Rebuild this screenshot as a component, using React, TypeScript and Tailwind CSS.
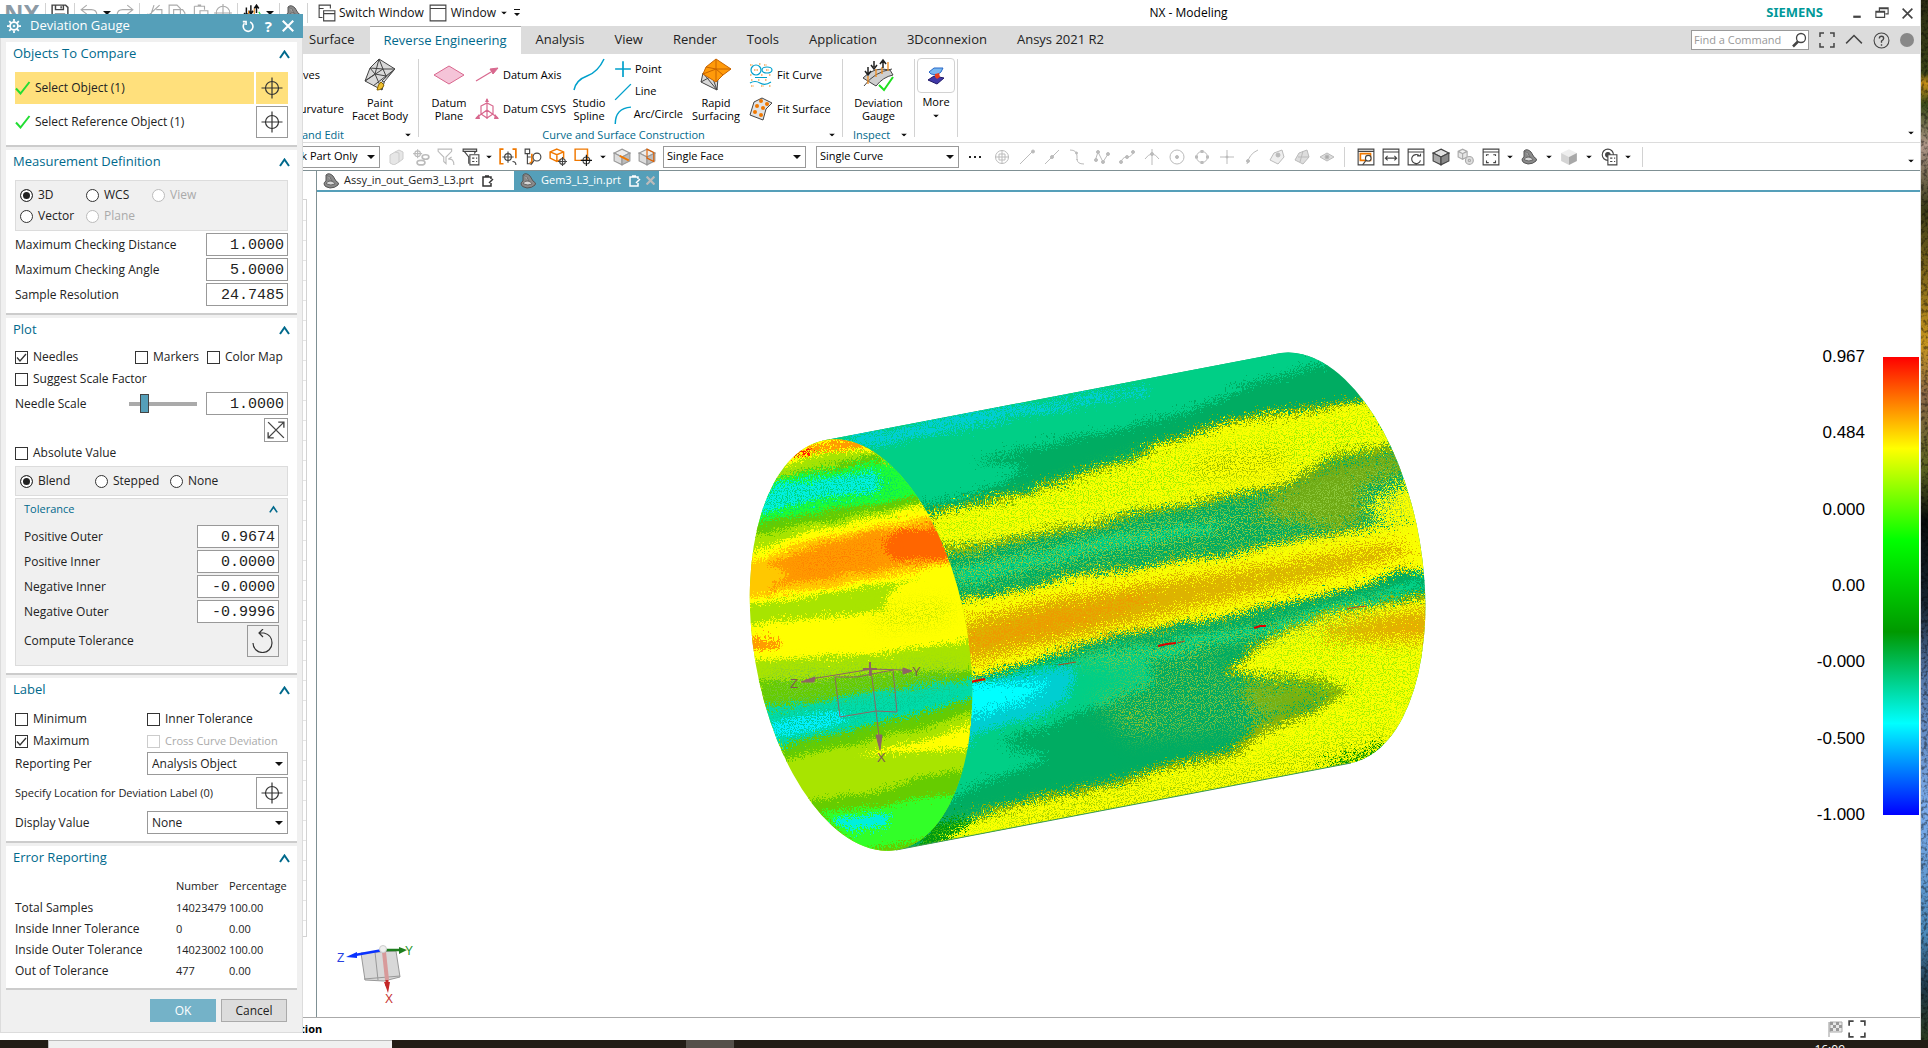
import type { ReactNode } from "react";

const Caret = ({ className = "" }: { className?: string }) => (
  <svg width="8" height="4" viewBox="0 0 8 4" className={`shrink-0 ${className}`}>
    <path d="M0 0h8L4 4z" fill="#111" />
  </svg>
);

const Sep = ({ className = "h-5" }: { className?: string }) => (
  <div className={`w-px shrink-0 bg-[#d2d2d2] ${className}`} />
);

function Icon({ size = 18, color = "#444", box = 16, children }: { size?: number; color?: string; box?: number; children: ReactNode }) {
  return (
    <svg width={size} height={size} viewBox={`0 0 ${box} ${box}`} fill="none" stroke={color} className="shrink-0">
      {children}
    </svg>
  );
}

const Target = () => (
  <svg width="22" height="22" viewBox="0 0 22 22" fill="none" stroke="#333" strokeWidth="1.200">
    <circle cx="11" cy="11" r="6.500" />
    <path d="M11 .5v21M.5 11h21" />
  </svg>
);

const Tick = () => (
  <svg width="16" height="14" viewBox="0 0 16 14" fill="none" stroke="#22dd33" strokeWidth="2" className="shrink-0">
    <path d="M1 7.500l4.500 5L14.500 1" />
  </svg>
);

const PartIcon = () => (
  <svg width="17" height="16" viewBox="0 0 17 16" className="shrink-0">
    <path d="M3 2q3-3 7 1l3 5q4 2 2 4-3 3-8 3-6-1-6-4 0-2 2-3z" fill="#8a8a8a" stroke="#555" />
    <path d="M4 2.500q3 0 5 5.500M3.500 11q0-3 4.500-3 4 1 4 3-4 2-8.500 0z" fill="#d8d8d8" stroke="#666" />
  </svg>
);

const DocIcon = ({ color }: { color: string }) => (
  <svg width="12" height="12" viewBox="0 0 12 12" fill="none" stroke={color} strokeWidth="1.500" className="shrink-0">
    <path d="M9 4V2H1v9h8V8M3 1h4M11 4L7 8" />
  </svg>
);

const Chevron = ({ size = 11 }: { size?: number }) => (
  <svg width={size} height="9" viewBox="0 0 11 9" fill="none" stroke="#00698c" strokeWidth="2">
    <path d="M1 8l4.500-6.500L10 8" />
  </svg>
);

const Corners = ({ size = 16 }: { size?: number }) => (
  <Icon size={size}>
    <path d="M1 5V1h4M11 1h4v4M15 11v4h-4M5 15H1v-4" strokeWidth="1.500" />
  </Icon>
);

/* ---------- quick access bar ---------- */

function TitleBar() {
  return (
    <header className="flex h-[26px] shrink-0 items-center bg-white text-xs">
      <div className="flex w-[318px] shrink-0 items-center gap-[5px] pl-1">
        <span className="w-[36px] text-[24px] leading-[26px] font-bold text-[#8c9aa5]">NX</span>
        <Sep />
        <Icon size={18}><path d="M1 1h12l2 2v12H1zM4 1v4h7V1M4 15V9h8v6M9 2v2" strokeWidth="1.300" /></Icon>
        <Sep />
        <Icon color="#aaa"><path d="M6 1L1 5l5 4M1 5h9q5 0 5 5v2" /></Icon>
        <Caret />
        <Icon color="#aaa"><path d="M10 1l5 4-5 4M15 5H6q-5 0-5 5v2" /></Icon>
        <Sep />
        <Icon color="#aaa"><path d="M1 12L13 1M8 1l-3 9M3 9a2 3 0 1 0 2 4M10 5h5v4" /></Icon>
        <Icon color="#aaa"><path d="M1 1h7l3 3v8H1zM5 5h8l2 3v8H5z" /></Icon>
        <Icon color="#aaa"><path d="M3 2h9v3M3 2v10h4M6 1h3M8 6h7v9H8z" /></Icon>
        <Icon color="#aaa"><circle cx="8" cy="8" r="6" /><path d="M8 0v16M0 8h16" /></Icon>
        <Sep />
        <Icon>
          <path d="M3 3v7M1 8l2 3 2-3M7 1v7M5 6l2 3 2-3M12 8V1M10 4l2-3 2 3" stroke="#111" strokeWidth="1.300" />
          <path d="M5 6v6M10 4v6" stroke="#f28c1e" />
          <path d="M14 7l2 3" stroke="#22dd33" />
        </Icon>
        <Caret />
        <Sep />
        <PartIcon />
        <Sep />
      </div>
      <Icon><path d="M1 4V1h10v3M1 4h4M1 4v8h3M5 6h10v9H5zM5 8.500h10" /></Icon>
      <a href="#switch" className="ml-[3px] text-[#111]">Switch Window</a>
      <span className="ml-[5px] flex items-center">
        <Icon><path d="M1 1h14v14H1zM1 4h14" /></Icon>
      </span>
      <a href="#window" className="ml-1 text-[#111]">Window</a>
      <Caret className="ml-1 scale-75" />
      <svg width="8" height="8" viewBox="0 0 8 8" className="ml-[5px] shrink-0"><path d="M1 0h6v1H1zM1 4h6L4 7z" fill="#111" /></svg>
      <div className="flex-[7]" />
      <h1 className="text-xs text-black">NX - Modeling</h1>
      <div className="flex-[6]" />
      <span className="font-['Noto_Sans'] text-[13px] font-bold text-[#009999]">SIEMENS</span>
      <div className="ml-7 flex items-center gap-3 pr-[6px]">
        <button aria-label="Minimize"><Icon size={12}><path d="M3 13h10" strokeWidth="3" /></Icon></button>
        <button aria-label="Restore"><Icon size={14}><path d="M5 6V2h10v7h-3M1 6h10v7H1zM5 3h10M1 7h10" strokeWidth="1.300" /></Icon></button>
        <button aria-label="Close"><Icon size={13}><path d="M2 2l12 12M14 2L2 14" strokeWidth="2" /></Icon></button>
      </div>
    </header>
  );
}

const TABS = ["Surface", "Reverse Engineering", "Analysis", "View", "Render", "Tools", "Application", "3Dconnexion", "Ansys 2021 R2"];

function TabBar() {
  return (
    <nav className="flex h-7 shrink-0 items-stretch bg-[#dcdcdc] pl-[294px] text-[13px] text-[#222]">
      {TABS.map((tab) => (
        <a
          key={tab}
          href="#tab"
          className={tab === "Reverse Engineering" ? "flex items-center border-t border-[#aaa] bg-white px-[14px] text-[#00698c]" : "flex items-center px-[15px]"}
        >
          {tab}
        </a>
      ))}
      <div className="flex-1" />
      <div className="flex items-center gap-[10px] pr-[6px]">
        <label className="flex h-5 w-[118px] items-center border border-[#999] bg-white pr-px">
          <input aria-label="Find a Command" placeholder="Find a Command" className="w-full min-w-0 pl-[2px] text-[11px] outline-none placeholder:text-[#999]" />
          <Icon size={16}><circle cx="10" cy="6" r="4.500" strokeWidth="1.300" /><path d="M7 9.500l-5 5" strokeWidth="2.500" /></Icon>
        </label>
        <Corners />
        <Icon><path d="M1 11l7-7 7 7" strokeWidth="1.300" /></Icon>
        <Icon size={17}><circle cx="8" cy="8" r="7" /><path d="M6 6q0-2 2-2t2 2q0 1-2 2.500V10M8 11.500v1.500" strokeWidth="1.300" /></Icon>
        <span className="h-[14px] w-[14px] rounded-full bg-[#888]" />
      </div>
    </nav>
  );
}

/* ---------- ribbon ---------- */

function BigButton({ icon, lines, className = "" }: { icon: ReactNode; lines: string[]; className?: string }) {
  return (
    <button className={`flex shrink-0 flex-col items-center text-[11px] leading-[13px] text-black ${className}`}>
      <span className="mb-1 flex h-[34px] items-center justify-center">{icon}</span>
      {lines.map((line) => (
        <span key={line} className="whitespace-nowrap">{line}</span>
      ))}
    </button>
  );
}

function SmallButton({ icon, label, className = "h-[34px] gap-1" }: { icon: ReactNode; label: string; className?: string }) {
  return (
    <button className={`flex items-center text-[11px] whitespace-nowrap text-black ${className}`}>
      <span className="flex w-6 justify-center">{icon}</span>
      {label}
    </button>
  );
}

const Facet = () => (
  <svg width="34" height="34" viewBox="0 0 34 34" stroke="#444" strokeLinejoin="round">
    <path d="M7 10L16 1l16 10-9 7-4 14-17-9z" fill="#d9d9d9" />
    <path d="M7 10l13 1 12 0M16 1l4 10-18 12M20 11l3 7M7 10l5 6 7 16M12 16l11 2M2 23l10-7M16 1l-4 15M10 28l13-10" fill="none" />
    <path d="M31 12L21 24l-2-1z" fill="#fff" />
    <path d="M18 24l3 3q-2 5-7 5 1-6 4-8z" fill="#f0c030" stroke="#886600" />
  </svg>
);

function Ribbon() {
  return (
    <section className="flex h-[89px] shrink-0 border-b border-[#dcdcdc] bg-white">
      <div className="flex w-[418px] shrink-0 flex-col">
        <div className="flex h-[75px] justify-end pt-1 pr-[10px]">
          <div className="mr-2 flex w-[90px] flex-col items-end text-[11px]">
            <button className="h-[34px] pr-6">Curves</button>
            <button className="h-[34px]">Curvature</button>
          </div>
          <BigButton className="w-14" icon={<Facet />} lines={["Paint", "Facet Body"]} />
        </div>
        <div className="flex h-3 items-center justify-between pr-[6px] pl-[302px] text-[11px] text-[#00698c]">
          and Edit
          <Caret className="scale-75" />
        </div>
      </div>
      <Sep className="mt-[5px] h-[78px]" />
      <div className="flex w-[423px] shrink-0 flex-col">
        <div className="flex h-[75px] pt-1 pl-2">
          <BigButton
            className="w-11"
            icon={<svg width="32" height="20" viewBox="0 0 32 20"><path d="M16 1l15 9-15 9L1 10z" fill="#f5c4d8" stroke="#d8688e" /></svg>}
            lines={["Datum", "Plane"]}
          />
          <div className="ml-1 flex w-[88px] flex-col">
            <SmallButton label="Datum Axis" icon={<svg width="24" height="16" viewBox="0 0 24 16" stroke="#d8688e" fill="#d8688e"><path d="M1 14L16 5" strokeWidth="1.200" /><path d="M15 2l8-1-5 6z" /></svg>} />
            <SmallButton label="Datum CSYS" icon={<svg width="24" height="22" viewBox="0 0 24 22" stroke="#d8688e" fill="none" strokeWidth="1.200"><path d="M12 1v20M6 8l6-3 6 3v8l-6 4-6-4zM12 12L1 20M12 12l11 8" /><path d="M10 4l2-4 2 4zM4 16l-4 5h5zM20 16l4 5h-5z" fill="#d8688e" stroke="none" /></svg>} />
          </div>
          <BigButton
            className="ml-1 w-11"
            icon={<svg width="34" height="34" viewBox="0 0 34 34" fill="none" stroke="#00a0cc" strokeWidth="1.500"><path d="M2 32q2-10 13-14T32 1" /></svg>}
            lines={["Studio", "Spline"]}
          />
          <div className="flex w-[72px] flex-col">
            <SmallButton className="h-[22px]" label="Point" icon={<Icon color="#00a0cc"><path d="M8 1v14M1 8h14" strokeWidth="1.500" /></Icon>} />
            <SmallButton className="h-[23px]" label="Line" icon={<Icon color="#00a0cc"><path d="M1 15L15 1" strokeWidth="1.200" /></Icon>} />
            <SmallButton className="h-[23px]" label="Arc/Circle" icon={<Icon color="#00a0cc"><path d="M2 16Q2 2 16 1" strokeWidth="1.300" /></Icon>} />
          </div>
          <BigButton
            className="ml-2 w-[50px]"
            icon={
              <svg width="34" height="34" viewBox="0 0 34 34" stroke="#444" strokeLinejoin="round">
                <path d="M4 15l-2 9 16 8 1-12z" fill="#d9d9d9" />
                <path d="M4 15l14 17M2 24l11-6 5 14" fill="none" />
                <path d="M7 9L17 1l15 10-8 6-7 7L4 16z" fill="#ff9a0a" stroke="#c86400" />
                <path d="M7 9l10 2 15 0M17 1v10L4 16M17 11l7 6M17 11v12" fill="none" stroke="#c86400" />
              </svg>
            }
            lines={["Rapid", "Surfacing"]}
          />
          <div className="ml-2 flex flex-col">
            <SmallButton
              label="Fit Curve"
              icon={
                <svg width="24" height="24" viewBox="0 0 24 24" fill="none" stroke="#00a0cc" strokeWidth="1.200">
                  <circle cx="7" cy="7" r="5" /><ellipse cx="18" cy="7" rx="5" ry="3" /><path d="M1 20q5-3 10 0t11-1M6 14.500h12" />
                  <path d="M1 2h3M10 1h2M1 12h2M15 2h3M12 12h2M20 12h2M2 17h2M9 17h2M16 17h2M2 23h3M12 23h3M20 23h2M5 7h4M17 7h3" stroke="#f07800" strokeDasharray="1.500 1" />
                </svg>
              }
            />
            <SmallButton
              label="Fit Surface"
              icon={
                <svg width="24" height="24" viewBox="0 0 24 24">
                  <path d="M5 5l8-4 10 5-6 6-3 11L1 18z" fill="#e2e2e2" stroke="#444" />
                  <g fill="#f07800"><circle cx="12" cy="4" r="2" /><circle cx="18" cy="7" r="2" /><circle cx="8" cy="9" r="2" /><circle cx="14" cy="11" r="2" /><circle cx="6" cy="15" r="2" /><circle cx="12" cy="18" r="2" /></g>
                </svg>
              }
            />
          </div>
        </div>
        <div className="flex h-3 items-center pr-[6px] text-[11px] text-[#00698c]">
          <span className="flex-1 text-center">Curve and Surface Construction</span>
          <Caret className="scale-75" />
        </div>
      </div>
      <Sep className="mt-[5px] h-[78px]" />
      <div className="flex w-[71px] shrink-0 flex-col">
        <div className="flex h-[75px] justify-center pt-1">
          <BigButton
            icon={
              <svg width="34" height="34" viewBox="0 0 34 34">
                <path d="M2 20Q13 8 29 12l3 5q-10 2-17 11z" fill="#cfcfcf" stroke="#444" />
                <path d="M3 28q10-14 28-17" stroke="#444" fill="none" />
                <path d="M7 18v8M15 11v8M21 9v7M27 4v9" stroke="#f28c1e" strokeWidth="1.300" />
                <path d="M7 9v7M4 13l3 4 3-4M13 3v6M10 7l3 4 3-4M22 10V2M19 6l3-4 3 4" stroke="#222" strokeWidth="1.500" fill="none" />
                <path d="M18 27l5 5L32 19" stroke="#1fe01f" strokeWidth="2" fill="none" />
              </svg>
            }
            lines={["Deviation", "Gauge"]}
          />
        </div>
        <div className="flex h-3 items-center justify-between pr-[6px] pl-[10px] text-[11px] text-[#00698c]">
          Inspect
          <Caret className="scale-75" />
        </div>
      </div>
      <Sep className="mt-[5px] h-[78px]" />
      <div className="flex w-[42px] shrink-0 flex-col items-center pt-1 text-[11px]">
        <button className="flex flex-col items-center">
          <span className="mb-px flex h-[35px] w-[38px] items-center justify-center rounded-sm border border-[#d2d2d2]">
            <svg width="18" height="18" viewBox="0 0 18 18">
              <path d="M1 13l6-4 10 2-7 6z" fill="#4038a8" stroke="#201868" />
              <path d="M2 5l5-4h9l-2 4-4 3-6-1z" fill="#7ab8f0" stroke="#2868c8" />
              <path d="M8 7l4-1 1 4-3 2-2-2z" fill="#e84020" />
            </svg>
          </span>
          <span className="leading-[16px]">More</span>
          <Caret className="mt-1 scale-75" />
        </button>
      </div>
      <Sep className="mt-[5px] h-[78px]" />
      <div className="flex flex-1 items-end justify-end pr-[5px] pb-[7px]">
        <Caret className="scale-75" />
      </div>
    </section>
  );
}

/* ---------- selection toolbar ---------- */

function Combo({ label, value, className }: { label: string; value: string; className: string }) {
  return (
    <span className={`relative flex shrink-0 items-center ${className}`}>
      <select aria-label={label} className="h-full w-full appearance-none border border-[#999] bg-white pr-4 pl-[3px] text-[11px] text-black outline-none">
        <option>{value}</option>
      </select>
      <Caret className="pointer-events-none absolute right-[5px]" />
    </span>
  );
}

const Cell = ({ children }: { children: ReactNode }) => (
  <button className="flex w-[25px] shrink-0 items-center justify-center">{children}</button>
);

const Cube = ({ top, left, right, stroke }: { top: string; left: string; right: string; stroke: string }) => (
  <>
    <path d="M8 1l7 3.500-7 3.500-7-3.500z" fill={top} stroke={stroke} />
    <path d="M1 4.500L8 8v7l-7-3.500z" fill={left} stroke={stroke} />
    <path d="M15 4.500L8 8v7l7-3.500z" fill={right} stroke={stroke} />
  </>
);

const SNAPS: ReactNode[] = [
  <><circle cx="8" cy="8" r="6.500" /><path d="M8 1v14M1 8h14M5 5h6v6H5z" /></>,
  <><path d="M1 15L14 2" /><circle cx="14" cy="2.500" r="1.500" fill="#bbb" /></>,
  <><path d="M1 15L15 1" /><circle cx="8" cy="8" r="1.500" fill="#bbb" /></>,
  <><path d="M1 1q7 0 7 6t0 3q0 5 7 5" /><circle cx="7.500" cy="4" r="1" fill="#bbb" /></>,
  <><path d="M1 12L4 3l5 10 5-8" /><circle cx="4" cy="3" r="1.500" fill="#bbb" /><circle cx="9" cy="13" r="1.500" fill="#bbb" /><circle cx="2" cy="11" r="1.500" fill="#bbb" /><circle cx="14" cy="5" r="1.500" fill="#bbb" /></>,
  <><path d="M2 14q1-6 6-6t7-6" /><circle cx="2" cy="13" r="1.500" fill="#bbb" /><circle cx="8" cy="8" r="1.500" fill="#bbb" /><circle cx="14" cy="3" r="1.500" fill="#bbb" /></>,
  <><path d="M8 0v16M1 10q7-10 14 0" /><circle cx="8" cy="5" r="1.500" fill="#bbb" /></>,
  <><circle cx="8" cy="8" r="7" /><circle cx="8" cy="8" r="1.500" fill="#bbb" /></>,
  <><circle cx="8" cy="8" r="5.500" /><path d="M8 1v3M8 12v3M1 8h3M12 8h3" strokeWidth="3" /></>,
  <><path d="M8 1v14M1 8h14" /><circle cx="8" cy="8" r="1" fill="#bbb" /></>,
  <><path d="M3 15Q5 5 14 1" /><circle cx="4" cy="12" r="1.500" fill="#bbb" /></>,
  <><path d="M5 4l8-3 2 7-6 7-8-4z" fill="#eee" /><circle cx="9" cy="6" r="2" fill="#bbb" /></>,
  <><path d="M5 4l8-3 2 7-6 7-8-4z" fill="#ddd" /><path d="M9 2L6 13M4 8h11" /></>,
  <><path d="M1 8l7-4 7 4-7 4z" fill="#ddd" /><circle cx="8" cy="8" r="2" fill="#aaa" /></>,
];

function SelectionBar() {
  return (
    <section className="flex h-7 shrink-0 items-center border-b border-[#7f9094] bg-white">
      <Combo label="Selection scope" value="Within Work Part Only" className="ml-[240px] h-[22px] w-[140px]" />
      <div className="ml-[3px] flex flex-1 items-center">
        <Cell><Icon color="#ccc" size={16}><path d="M2 6l5-3 4 1v9l-5 3-4-2zM7 3l4-2 4 2v7l-4 3" fill="#e6e6e6" /></Icon></Cell>
        <Cell><Icon color="#bbb"><path d="M5 1v8M1 5h8" /><circle cx="5" cy="5" r="2.500" /><ellipse cx="12" cy="8" rx="3" ry="2" strokeWidth="1.500" /><ellipse cx="8" cy="13" rx="3.500" ry="2" strokeWidth="1.500" /></Icon></Cell>
        <Cell><Icon color="#bbb"><path d="M1 1h12v2L8 8v6l-2-2V8L1 3zM10 10l3-2M10 10q5-1 5 5" /></Icon></Cell>
        <Cell><Icon><path d="M1 1h12v2H1zM2 3l4 5v6M12 3l-1 2" /><path d="M7 6h8v9H7zM9 9h2M9 12h2M12.500 9h1M12.500 12h1" fill="#fff" /></Icon></Cell>
        <Caret className="mr-[2px] ml-[2px] scale-75" />
        <Cell><Icon><path d="M4 1H1v13h3M12 1h3v8" stroke="#f07800" strokeWidth="1.500" /><path d="M8 3v10M3 8h10M12 12q3 0 3 3" /><circle cx="8" cy="8" r="3" /></Icon></Cell>
        <Cell><Icon><path d="M1 1h4v4H1zM3 5v9h3M3 8h3" /><path d="M7 5v8H5" stroke="#f07800" strokeWidth="1.500" /><circle cx="11.500" cy="8" r="3.500" /><path d="M9 11l-3 4" /></Icon></Cell>
        <Cell><Icon><path d="M7 1l6 2.500V9L7 12 1 9V3.500zM1 3.500L7 6l6-2.500M7 6v6" stroke="#f07800" strokeWidth="1.300" /><circle cx="12" cy="12" r="2.500" fill="#fff" /><path d="M12 8v8M8 12h8" /></Icon></Cell>
        <Cell><Icon><path d="M1 1h11v10H1z" stroke="#f07800" strokeWidth="1.300" /><circle cx="11" cy="11" r="3" /><path d="M11 6v10M6 11h10" stroke="#111" /></Icon></Cell>
        <Caret className="mr-[2px] ml-1 scale-75" />
        <Cell><Icon><Cube top="#eee" left="#ddd" right="#bbb" stroke="#999" /><path d="M6 7l8 4" stroke="#f07800" strokeWidth="1.500" /></Icon></Cell>
        <Cell><Icon><Cube top="#eee" left="#ddd" right="#bbb" stroke="#999" /><path d="M8 1v8l6 3V4z" stroke="#e06000" /></Icon></Cell>
        <Combo label="Face rule" value="Single Face" className="ml-1 h-[22px] w-[143px]" />
        <Combo label="Curve rule" value="Single Curve" className="ml-[10px] h-[22px] w-[143px]" />
        <span className="ml-[2px] flex w-7 justify-center gap-[3px]">
          <i className="size-[2px] bg-[#222]" />
          <i className="size-[2px] bg-[#222]" />
          <i className="size-[2px] bg-[#222]" />
        </span>
        {SNAPS.map((shape, i) => (
          <Cell key={i}><Icon size={16} color="#bbb">{shape}</Icon></Cell>
        ))}
        <Sep className="mr-2 ml-[5px] h-5" />
        <Cell><Icon><path d="M1 1h14v14H1zM1 3h14" /><path d="M3 5h9v6H3z" stroke="#f07800" strokeWidth="1.500" /><circle cx="10" cy="9" r="2.500" fill="#fff" /><path d="M8 11l-3 4" /></Icon></Cell>
        <Cell><Icon><path d="M1 1h14v14H1zM1 3.500h14M3 9h10M5 7L3 9l2 2M11 7l2 2-2 2" /></Icon></Cell>
        <Cell><Icon><path d="M1 1h14v14H1zM1 3.500h14M11 7a4 4 0 1 0 1 4M9 7h3V5" /></Icon></Cell>
        <Cell><Icon><Cube top="#e2e2e2" left="#aaa" right="#888" stroke="#444" /></Icon></Cell>
        <Cell><Icon color="#aaa"><path d="M1 3l4-2 4 2v5l-4 2-4-2zM1 3l4 2 4-2M5 5v5" fill="#e6e6e6" /><circle cx="11" cy="11" r="3.500" fill="#ddd" /><circle cx="11" cy="11" r="1" /></Icon></Cell>
        <Cell><Icon><path d="M1 1h14v14H1zM1 3.500h14M4 7V6h2M10 6h2v1M12 11v2h-2M6 13H4v-2" /></Icon></Cell>
        <Caret className="mr-[3px] ml-[3px] scale-75" />
        <Cell><PartIcon /></Cell>
        <Caret className="mr-[3px] ml-[3px] scale-75" />
        <Cell><Icon><Cube top="#eee" left="#d4d4d4" right="#a8a8a8" stroke="none" /></Icon></Cell>
        <Caret className="mr-[3px] ml-1 scale-75" />
        <Cell><Icon><circle cx="7" cy="6" r="5" /><circle cx="7" cy="6" r="2" fill="#444" /><path d="M7 6h8v9H7zM9 9h2M9 12h2M12.500 9h1M12.500 12h1" fill="#fff" /></Icon></Cell>
        <Caret className="ml-[3px] scale-75" />
        <Sep className="ml-[10px] h-5" />
        <div className="flex-1" />
        <Caret className="mt-2 mr-[5px] scale-75" />
      </div>
    </section>
  );
}

/* ---------- graphics window ---------- */

function Tube() {
  return (
    <svg className="absolute inset-0 h-full w-full" viewBox="317 192 1603 825" preserveAspectRatio="xMidYMid meet">
      <defs>
        <clipPath id="outer">
          <path d="M826 440L1281 353A107 208 -9.800 0 1 1351 763L896 850A107 208 -9.800 0 1 826 440z" />
        </clipPath>
        <clipPath id="inner">
          <ellipse cx="861" cy="645" rx="107" ry="208" transform="rotate(-9.800 861 645)" />
        </clipPath>
        <filter id="grain" x="-5%" y="-5%" width="110%" height="110%" colorInterpolationFilters="sRGB">
          <feTurbulence type="fractalNoise" baseFrequency="0.9" numOctaves="2" seed="3" />
          <feDisplacementMap in="SourceGraphic" scale="34" xChannelSelector="R" yChannelSelector="G" result="d" />
          <feTurbulence type="fractalNoise" baseFrequency="0.015 0.04" numOctaves="2" seed="8" result="w" />
          <feDisplacementMap in="d" in2="w" scale="12" xChannelSelector="R" yChannelSelector="G" />
        </filter>
        <filter id="soft" x="-5%" y="-5%" width="110%" height="110%" colorInterpolationFilters="sRGB">
          <feTurbulence type="fractalNoise" baseFrequency="0.9" numOctaves="2" seed="21" />
          <feDisplacementMap in="SourceGraphic" scale="60" xChannelSelector="R" yChannelSelector="G" />
        </filter>
        <filter id="fine" x="-5%" y="-5%" width="110%" height="110%" colorInterpolationFilters="sRGB">
          <feTurbulence type="fractalNoise" baseFrequency="0.8" numOctaves="2" seed="5" />
          <feDisplacementMap in="SourceGraphic" scale="22" xChannelSelector="R" yChannelSelector="G" result="d" />
          <feTurbulence type="fractalNoise" baseFrequency="0.02 0.06" numOctaves="2" seed="2" result="w" />
          <feDisplacementMap in="d" in2="w" scale="10" xChannelSelector="R" yChannelSelector="G" />
        </filter>
        <filter id="specks" x="-5%" y="-5%" width="110%" height="110%" colorInterpolationFilters="sRGB">
          <feTurbulence type="fractalNoise" baseFrequency="0.85" numOctaves="2" seed="11" />
          <feColorMatrix values="0 0 0 0 0  0 0 0 0 0  0 0 0 0 0  14 0 0 0 -7.400" result="m" />
          <feGaussianBlur in="SourceGraphic" stdDeviation="9" />
          <feComposite in2="m" operator="in" />
        </filter>
      </defs>

      <g clipPath="url(#outer)">
        <path d="M700 300h800v600H700z" fill="#00ac62" />
        <g filter="url(#grain)">
          <path d="M800 430L1290 340L1330 362L1247 385L1180 415L1113 430L1030 446L975 462L1030 464L1000 484L940 502L880 512z" fill="#00cf86" />
          <path d="M850 436L980 413L1063 401L1150 388L1147 393L1063 408L980 424L850 449z" fill="#00ced1" />
          <path d="M925 513L963 502L1030 492L1040 484L1127 460L1153 444L1213 425L1263 414L1370 399L1400 450L1330 460L1290 490L1213 503L1140 516L1063 533L980 550L935 553z" fill="#8fb000" />
          <path d="M927 517L963 506L1030 497L1042 488L1127 465L1153 449L1213 430L1263 419L1370 404L1400 446L1330 454L1290 484L1213 498L1140 511L1063 527L980 544L935 548z" fill="#faff00" />
          <path d="M950 570L1050 548L1113 534L1230 520L1210 532L1113 550L1040 566L955 588z" fill="#00cf86" />
          <path d="M955 599L1030 586L1063 576L1147 565L1247 548L1330 531L1440 517L1440 577L1403 571L1313 598L1213 619L1140 632L1047 656L965 681z" fill="#b4b800" />
          <path d="M955 602L1030 589L1063 579L1147 568L1247 551L1330 534L1440 518L1440 575L1403 568L1313 595L1213 616L1140 629L1047 653L965 678z" fill="#faff00" />
          <path d="M960 686L1047 662L1273 624L1380 591L1425 579L1425 588L1380 600L1273 632L1147 660L1155 685L1080 712L1000 745L1050 756L980 784L950 800z" fill="#00cf86" />
          <path d="M960 686L1077 665L1068 697L1040 717L980 732L960 752z" fill="#00ced1" />
          <path d="M960 689L1047 681L1030 697L980 713L960 720z" fill="#00ffff" />
          <path d="M1222 676L1260 641L1303 622L1347 608L1440 593L1440 780L1351 790L940 870L936 834L963 817L1013 804L1080 788L1147 772L1235 748L1257 723L1313 706L1330 690L1290 682z" fill="#8fb000" />
          <path d="M1230 674L1266 643L1305 626L1347 612L1440 598L1440 780L1351 790L940 870L942 838L963 822L1013 810L1080 794L1147 778L1240 755L1262 733L1313 713L1350 690L1320 678z" fill="#faff00" />
          <path d="M1322 764L1383 747L1383 753z" fill="#009900" stroke="#009900" strokeWidth="3" />
          <path d="M915 864L925 826L955 816L975 818L945 842z" fill="#009a10" />
        </g>
        <g filter="url(#soft)">
          <path d="M1310 470L1400 448L1412 468L1360 490L1365 522L1330 530L1250 512z" fill="#6faa14" />
          <path d="M1368 500L1430 475L1440 530L1380 528z" fill="#faff00" />
          <path d="M960 622L1047 600L1147 583L1247 569L1397 543L1415 552L1313 580L1213 602L1113 628L1030 648L960 665z" fill="#dcb400" />
          <path d="M960 638L1040 612L1160 592L1140 604L1060 632L960 652z" fill="#ec9c00" />
          <path d="M1314 633L1347 620L1440 608L1440 638L1330 641z" fill="#dcb400" />
          <path d="M1240 684L1300 682L1345 688L1320 704L1270 722L1248 705z" fill="#78b010" />
          <path d="M1120 722L1150 718L1142 724z" fill="#b4c800" />
        </g>
        <g filter="url(#specks)">
          <path d="M940 552L1140 516L1290 490L1400 455L1410 520L1250 548L1060 575L960 596z" fill="#8cc83c" />
          <path d="M927 522L1040 492L1153 452L1370 406L1395 440L1200 495L940 545z" fill="#a0f000" />
          <path d="M1090 700L1200 645L1235 680L1290 690L1270 730L1130 740z" fill="#78c040" />
          <path d="M1240 672L1305 628L1425 600L1425 700L1350 760L900 850L960 822L1240 760L1350 695z" fill="#aaf000" />
          <path d="M1020 815L1240 768L1400 730L1400 760L1000 840z" fill="#a0c800" />
          <path d="M960 640L1040 612L1260 575L1240 590L1060 635L960 656z" fill="#ff7800" />
          <path d="M960 625L1397 541L1313 580L1113 630L960 667z" fill="#d2c800" opacity=".6" />
          <path d="M1320 634L1425 610L1425 642z" fill="#ff9c00" />
          <path d="M1050 655L1280 615L1400 590L1400 600L1280 640L1120 670z" fill="#8cc83c" />
          <path d="M1200 455L1290 450L1280 475L1190 480z" fill="#a0b400" />
        </g>
        <path d="M970 682l10-2 5-1M1158 646l9-2 9-1M1254 628l6-2 6 0" stroke="#dc0000" strokeWidth="2" fill="none" />
        <path d="M1058 665l18-3M1347 609l10-2 10-1M1177 643l8-2" stroke="#b04820" strokeWidth="1" fill="none" />
      </g>
      <path d="M896 850L1351 763" stroke="#3c9a50" />

      <g clipPath="url(#inner)">
        <path d="M700 400h300v480H700z" fill="#a8e400" />
        <g filter="url(#fine)">
          <path d="M760 470L800 440L880 425L880 452L830 452L780 466z" fill="#ffff00" />
          <path d="M790 458L815 444L870 436L870 447L830 450z" fill="#ff9c00" />
          <path d="M788 457L815 448L810 455z" fill="#ff2000" />
          <path d="M760 486L780 478L880 455L885 465L780 487z" fill="#66cc00" />
          <path d="M745 500L775 480L830 471L890 460L930 490L917 497L830 510L750 524z" fill="#1eff32" />
          <path d="M745 503L775 485L830 477L875 469L885 480L870 492L810 502L750 514z" fill="#00f0e0" />
          <path d="M745 524L830 510L925 495L930 503L830 520L745 536z" fill="#66cc00" />
          <path d="M740 556L813 530L930 507L960 570L893 583L813 597L740 606z" fill="#ffff00" />
          <path d="M740 564L813 540L935 514L950 562L893 575L813 590L740 598z" fill="#ffc800" />
          <path d="M765 562L830 542L935 520L952 560L893 568L797 582L765 592L790 574z" fill="#ff9a00" />
          <path d="M882 545L897 530L940 526L955 556L897 562z" fill="#ff6600" />
          <path d="M888 596L900 584L960 566L980 590L975 638L897 650L847 658L740 662L740 626L810 618L880 612z" fill="#ffff00" />
          <path d="M745 636L780 638L782 646L745 651z" fill="#ff9c00" />
          <path d="M755 682L870 675L980 670L980 712L870 740L785 760z" fill="#66cc00" />
          <path d="M760 710L863 693L980 678L980 696L850 730L770 748z" fill="#00dcaa" />
          <path d="M770 722L830 712L850 716L820 730L775 738z" fill="#00f0ff" />
          <path d="M855 758L980 724L975 748L900 753z" fill="#ffff00" />
          <path d="M800 802L880 790L975 765L975 900H800z" fill="#66cc00" />
          <path d="M820 812L880 806L965 792L955 834L860 852z" fill="#32ff28" />
          <path d="M832 818L892 814L886 828L850 832z" fill="#00f0dc" />
          <path d="M870 852L900 845L950 835L920 860z" fill="#66cc00" />
        </g>
        <g filter="url(#specks)">
          <path d="M755 485L880 465L915 492L760 518z" fill="#00d47a" />
          <path d="M765 710L965 678L965 696L780 745z" fill="#00c896" />
          <path d="M790 560L880 540L885 560L800 575z" fill="#ff7800" />
          <path d="M765 670L960 665L960 680L770 705z" fill="#7cc83c" />
          <path d="M870 610L950 602L950 620L880 628z" fill="#b4e000" />
        </g>
      </g>

      {/* work coordinate system on the face */}
      <g stroke="#8f6464" fill="#8f6464" strokeWidth="1">
        <path d="M870 662v14M863 669h14" strokeWidth="2" />
        <path d="M872 669L805 680M870 669L903 670M871 669L879 736M835 677l5 40 36-6 21 1-4-42M835 677l22 0 36-7" fill="none" />
        <path d="M801 682l14-5-1 5zM903 668l9 3-9 3zM876 735h6l-2 15z" />
      </g>
      <g fill="#7d5a50" className="font-['Liberation_Sans'] text-[13px]">
        <text x="790" y="688">Z</text>
        <text x="912" y="676">Y</text>
        <text x="877" y="762">X</text>
      </g>

      {/* view triad */}
      <path d="M361 953l35-2 4 26-16 4-19-1z" fill="#d8d8d8" stroke="#999" />
      <path d="M375 952l3 28M364 979l36-3" stroke="#999" fill="none" />
      <path d="M384 952l3 28" stroke="#d89a9a" strokeWidth="4" />
      <path d="M387 980v6" stroke="#c42828" strokeWidth="3" />
      <path d="M384 982h6l-2 11z" fill="#c42828" />
      <path d="M383 950l-28 5" stroke="#0a32ff" strokeWidth="2.500" />
      <path d="M346 957l11-5v6z" fill="#0a32ff" />
      <path d="M383 950h18" stroke="#1e7d1e" strokeWidth="2.500" />
      <path d="M399 947l8 3-8 4z" fill="#1e7d1e" />
      <circle cx="383" cy="949" r="3.500" fill="#eee" stroke="#ccc" />
      <g className="font-['Liberation_Sans'] text-[12px]">
        <text x="337" y="962" fill="#2840e0">Z</text>
        <text x="405" y="955" fill="#289628">Y</text>
        <text x="385" y="1003" fill="#c83232">X</text>
      </g>
    </svg>
  );
}

const SCALE = ["0.967", "0.484", "0.000", "0.00", "-0.000", "-0.500", "-1.000"];

function Viewport() {
  return (
    <main className="relative flex min-h-0 flex-1 justify-end bg-white">
      <Tube />
      <div className="relative mt-[156px] mr-px flex h-[476px]">
        <ul className="mr-[18px] flex flex-col justify-between text-right font-['Liberation_Sans'] text-[17px] leading-[18px] text-black">
          {SCALE.map((v) => (
            <li key={v}>{v}</li>
          ))}
        </ul>
        <div className="my-[9px] w-9 bg-[linear-gradient(to_bottom,#f00_0%,#ff0_20%,#0f0_40%,#090_60%,#0ff_80%,#00f_100%)]" />
      </div>
    </main>
  );
}

function DocTabs() {
  return (
    <div className="flex h-[21px] shrink-0 items-stretch border-b-2 border-[#559fb9] bg-white text-[11px]">
      <a href="#assy" className="flex w-[197px] items-center gap-1 pl-[6px] text-[#222]">
        <PartIcon />
        Assy_in_out_Gem3_L3.prt
        <span className="ml-1 flex"><DocIcon color="#333" /></span>
      </a>
      <a href="#gem" className="flex w-[145px] items-center gap-1 bg-[#559fb9] pl-[6px] text-white">
        <PartIcon />
        Gem3_L3_in.prt
        <span className="ml-1 flex"><DocIcon color="#fff" /></span>
        <span className="ml-px flex"><Icon size={9} color="#bbb"><path d="M1 1l14 14M15 1L1 15" strokeWidth="4" /></Icon></span>
      </a>
    </div>
  );
}

/* ---------- Deviation Gauge dialog ---------- */

function Section({ title, children }: { title: string; children: ReactNode }) {
  return (
    <section className="mb-[3px] border-b-2 border-[#cccccc] bg-white px-[9px] pb-[7px]">
      <div className="-mx-[2px] mb-[6px] flex h-6 items-center justify-between text-[13px] text-[#00698c]">
        <h3>{title}</h3>
        <Chevron />
      </div>
      {children}
    </section>
  );
}

const NumField = ({ id, value }: { id: string; value: string }) => (
  <input id={id} defaultValue={value} className="h-[23px] w-[82px] border border-[#999] bg-white pt-[2px] pr-[3px] pl-1 text-right font-['Liberation_Mono'] text-[15px] text-[#222] outline-none" />
);

function NumRow({ label, value }: { label: string; value: string }) {
  const id = label.replace(/ /g, "-");
  return (
    <div className="mt-[2px] flex items-center justify-between">
      <label htmlFor={id}>{label}</label>
      <NumField id={id} value={value} />
    </div>
  );
}

function Radio({ name, label, checked, disabled }: { name: string; label: string; checked?: boolean; disabled?: boolean }) {
  return (
    <label className={`flex h-[21px] items-center gap-[5px] ${disabled ? "text-[#aaa]" : ""}`}>
      <input
        type="radio"
        name={name}
        defaultChecked={checked}
        disabled={disabled}
        className="size-[13px] appearance-none rounded-full border border-[#333] bg-white checked:bg-[#222] checked:shadow-[inset_0_0_0_2px_white] disabled:border-[#bbb]"
      />
      {label}
    </label>
  );
}

function Check({ label, checked, disabled, className = "" }: { label: string; checked?: boolean; disabled?: boolean; className?: string }) {
  return (
    <label className={`relative flex h-[22px] items-center gap-[5px] ${disabled ? "text-[#aaa]" : ""} ${className}`}>
      <input
        type="checkbox"
        defaultChecked={checked}
        disabled={disabled}
        className="size-[13px] shrink-0 appearance-none border border-[#333] bg-white disabled:border-[#ccc]"
      />
      {checked && (
        <svg width="11" height="9" viewBox="0 0 11 9" fill="none" stroke="#333" strokeWidth="1.300" className="absolute left-px">
          <path d="M1 4.500L4 8l6-7" />
        </svg>
      )}
      {label}
    </label>
  );
}

function DialogSelect({ label, value }: { label: string; value: string }) {
  const id = label.replace(/ /g, "-");
  return (
    <div className="flex items-center justify-between">
      <label htmlFor={id}>{label}</label>
      <span className="relative flex w-[141px] items-center">
        <select id={id} className="h-[23px] w-full appearance-none border border-[#999] bg-white pl-1 text-[#222] outline-none">
          <option>{value}</option>
        </select>
        <Caret className="pointer-events-none absolute right-[5px]" />
      </span>
    </div>
  );
}

const ERRORS = [
  ["Total Samples", "14023479", "100.00"],
  ["Inside Inner Tolerance", "0", "0.00"],
  ["Inside Outer Tolerance", "14023002", "100.00"],
  ["Out of Tolerance", "477", "0.00"],
];

function GaugeDialog() {
  return (
    <aside role="dialog" aria-label="Deviation Gauge" className="absolute top-[14px] left-0 w-[303px] bg-[#f0f0f0] text-xs text-[#222]">
      <div className="flex h-6 items-center bg-[#559fb9] px-[7px] text-white">
        <Icon size={14} color="#fff"><circle cx="8" cy="8" r="4.500" strokeWidth="2" /><circle cx="8" cy="8" r="1" fill="#fff" /><path d="M8 0v3M8 13v3M0 8h3M13 8h3M2.500 2.500l2 2M11.500 11.500l2 2M13.500 2.500l-2 2M4.500 11.500l-2 2" strokeWidth="2" /></Icon>
        <h2 className="ml-[9px] flex-1 text-[13px]">Deviation Gauge</h2>
        <div className="flex items-center gap-[10px]">
          <button aria-label="Reset" className="flex"><Icon size={13} color="#fff"><path d="M10 2.500A6 6 0 1 1 3 4M1 2h4v4" strokeWidth="2" /></Icon></button>
          <button aria-label="Help" className="text-[15px] leading-5 font-bold">?</button>
          <button aria-label="Close dialog" className="mr-[2px] flex"><Icon size={12} color="#fff"><path d="M1 1l14 14M15 1L1 15" strokeWidth="2.800" /></Icon></button>
        </div>
      </div>
      <div className="border border-t-0 border-[#dcdcdc] px-[5px] pt-1">
        <Section title="Objects To Compare">
          <div className="flex gap-[2px]">
            <div className="flex h-8 flex-1 items-center gap-1 bg-[#ffe07c]"><Tick />Select Object (1)</div>
            <button aria-label="Select Object" className="flex size-8 items-center justify-center bg-[#ffe07c]"><Target /></button>
          </div>
          <div className="mt-[2px] flex gap-[2px]">
            <div className="flex h-8 flex-1 items-center gap-1"><Tick />Select Reference Object (1)</div>
            <button aria-label="Select Reference Object" className="flex size-8 items-center justify-center border border-[#999]"><Target /></button>
          </div>
        </Section>

        <Section title="Measurement Definition">
          <fieldset className="grid h-[51px] grid-cols-[66px_66px_66px] content-center border border-[#dcdcdc] bg-[#f0f0f0] pl-1">
            <Radio name="method" label="3D" checked />
            <Radio name="method" label="WCS" />
            <Radio name="method" label="View" disabled />
            <Radio name="method" label="Vector" />
            <Radio name="method" label="Plane" disabled />
          </fieldset>
          <NumRow label="Maximum Checking Distance" value="1.0000" />
          <NumRow label="Maximum Checking Angle" value="5.0000" />
          <NumRow label="Sample Resolution" value="24.7485" />
        </Section>

        <Section title="Plot">
          <div className="-mt-[2px] flex">
            <Check label="Needles" checked className="w-[120px]" />
            <Check label="Markers" className="w-[72px]" />
            <Check label="Color Map" />
          </div>
          <Check label="Suggest Scale Factor" />
          <div className="mt-[2px] flex items-center justify-between">
            <label htmlFor="scale" className="w-[114px]">Needle Scale</label>
            <input
              id="scale-slider"
              type="range"
              aria-label="Needle Scale slider"
              min={0}
              max={100}
              defaultValue={19}
              className="mr-auto h-1 w-[68px] appearance-none bg-[#aaa] [&::-webkit-slider-thumb]:h-[19px] [&::-webkit-slider-thumb]:w-[9px] [&::-webkit-slider-thumb]:appearance-none [&::-webkit-slider-thumb]:border [&::-webkit-slider-thumb]:border-[#444] [&::-webkit-slider-thumb]:bg-[#559fb9]"
            />
            <NumField id="scale" value="1.0000" />
          </div>
          <div className="mt-[3px] flex justify-end">
            <button aria-label="Reverse needles" className="flex size-6 items-center justify-center border border-[#999]">
              <Icon><path d="M1 1l14 14M1 15L15 1M10 1h5v5M1 10v5h5" strokeWidth="1.200" /></Icon>
            </button>
          </div>
          <Check label="Absolute Value" />
          <fieldset className="mt-[2px] grid h-[30px] grid-cols-[75px_75px_75px] content-center border border-[#dcdcdc] bg-[#f0f0f0] pl-1">
            <Radio name="color" label="Blend" checked />
            <Radio name="color" label="Stepped" />
            <Radio name="color" label="None" />
          </fieldset>
          <fieldset className="mt-[2px] border border-[#dcdcdc] bg-[#f0f0f0] px-2 pb-2">
            <div className="mb-[6px] flex h-5 items-center justify-between pr-px text-[#00698c]">
              <h4 className="text-[11px]">Tolerance</h4>
              <Chevron size={9} />
            </div>
            <NumRow label="Positive Outer" value="0.9674" />
            <NumRow label="Positive Inner" value="0.0000" />
            <NumRow label="Negative Inner" value="-0.0000" />
            <NumRow label="Negative Outer" value="-0.9996" />
            <div className="mt-[2px] flex items-center justify-between">
              Compute Tolerance
              <button aria-label="Compute Tolerance" className="flex size-8 items-center justify-center border border-[#999]">
                <svg width="22" height="24" viewBox="0 0 22 24" fill="none" stroke="#333" strokeWidth="1.200">
                  <path d="M7 4h5q8 2 8 10a9 9 0 0 1-19 0M11 0L7 4l4 4" />
                </svg>
              </button>
            </div>
          </fieldset>
        </Section>

        <Section title="Label">
          <div className="grid grid-cols-[132px_1fr]">
            <Check label="Minimum" />
            <Check label="Inner Tolerance" />
            <Check label="Maximum" checked />
            <Check label="Cross Curve Deviation" disabled className="text-[11px] whitespace-nowrap" />
          </div>
          <div className="flex flex-col gap-[2px]">
            <DialogSelect label="Reporting Per" value="Analysis Object" />
            <div className="flex items-center justify-between">
              <span className="text-[11px] whitespace-nowrap">Specify Location for Deviation Label (0)</span>
              <button aria-label="Specify Location" className="flex size-8 items-center justify-center border border-[#999]"><Target /></button>
            </div>
            <DialogSelect label="Display Value" value="None" />
          </div>
        </Section>

        <Section title="Error Reporting">
          <table className="w-full table-fixed text-left">
            <thead>
              <tr className="h-[21px]">
                <th className="w-[161px]" />
                <th className="w-[53px] text-[11px] font-normal">Number</th>
                <th className="text-[11px] font-normal">Percentage</th>
              </tr>
            </thead>
            <tbody>
              {ERRORS.map(([name, count, percent]) => (
                <tr key={name} className="h-[21px]">
                  <td className="leading-4">{name}</td>
                  <td className="text-[11px] leading-4">{count}</td>
                  <td className="text-[11px] leading-4">{percent}</td>
                </tr>
              ))}
            </tbody>
          </table>
        </Section>

        <div className="flex justify-end gap-[5px] px-[10px] pt-[6px] pb-[10px]">
          <button className="h-[23px] w-[66px] bg-[#74b2c8] text-white">OK</button>
          <button className="h-[23px] w-[66px] border border-[#aaa] bg-[#dcdcdc]">Cancel</button>
        </div>
      </div>
    </aside>
  );
}

/* ---------- shell ---------- */

function Desktop() {
  return (
    <svg className="h-full w-[7px] shrink-0" viewBox="0 0 7 1040" preserveAspectRatio="none">
      <defs>
        <linearGradient id="photo" x1="0" y1="0" x2="0" y2="1">
          <stop offset="0" stopColor="#2c2c14" />
          <stop offset=".07" stopColor="#3c4418" />
          <stop offset=".08" stopColor="#c89018" />
          <stop offset=".1" stopColor="#3a4a18" />
          <stop offset=".14" stopColor="#b0988a" />
          <stop offset=".2" stopColor="#3a3a18" />
          <stop offset=".33" stopColor="#c8961e" />
          <stop offset=".38" stopColor="#8a6848" />
          <stop offset=".45" stopColor="#5c6420" />
          <stop offset=".5" stopColor="#080c0c" />
          <stop offset=".58" stopColor="#182430" />
          <stop offset=".65" stopColor="#5878a8" />
          <stop offset=".78" stopColor="#7cacec" />
          <stop offset=".9" stopColor="#4c88b8" />
          <stop offset=".95" stopColor="#203848" />
          <stop offset="1" stopColor="#2c3c20" />
        </linearGradient>
        <filter id="leaf" x="0" y="0" width="1" height="1">
          <feTurbulence type="fractalNoise" baseFrequency="0.3" numOctaves="2" />
          <feColorMatrix values="0 0 0 0 0  0 0 0 0 0  0 0 0 0 0  4 0 0 0 -1.800" />
        </filter>
      </defs>
      <rect width="7" height="1040" fill="url(#photo)" />
      <rect width="7" height="1040" filter="url(#leaf)" opacity=".4" />
    </svg>
  );
}

export default function App() {
  return (
    <div className="relative flex h-screen flex-col overflow-hidden bg-[#231d16] font-['Open_Sans',sans-serif]">
      <div className="flex min-h-0 flex-1">
        <div className="flex min-w-0 flex-1 flex-col border-r border-[#dcdcdc] bg-white">
          <TitleBar />
          <TabBar />
          <Ribbon />
          <SelectionBar />
          <div className="flex min-h-0 flex-1">
            <div className="flex w-[316px] shrink-0 justify-end pt-7 pr-[9px]">
              <div className="mb-20 w-5 border-y border-r border-[#d2d2d2] pt-[20px]">
                <div className="h-full bg-[repeating-linear-gradient(to_bottom,#e4e4e4_0,#e4e4e4_1px,transparent_1px,transparent_20px)]" />
              </div>
            </div>
            <div className="flex min-w-0 flex-1 flex-col border-l border-[#7f9094]">
              <DocTabs />
              <Viewport />
            </div>
          </div>
          <footer className="flex h-[23px] shrink-0 items-center justify-between border-t border-[#aaa] pr-[54px] pl-[300px] text-[11px] font-bold text-black">
            tion
            <div className="flex items-center gap-1">
              <svg width="16" height="16" viewBox="0 0 16 16">
                <path d="M1 1v15" stroke="#999" />
                <path d="M2 1h12v10H2z" fill="#e8e8e8" stroke="#aaa" />
                <path d="M2 1h3v3H2zM8 1h3v3H8zM5 4h3v3H5zM11 4h3v3h-3zM2 7h3v3H2zM8 7h3v3H8z" fill="#999" />
              </svg>
              <Corners size={18} />
            </div>
          </footer>
        </div>
        <Desktop />
      </div>
      <div className="flex h-2 shrink-0 overflow-hidden">
        <div className="w-12" />
        <div className="w-[344px] border-t border-l border-[#bbb] bg-[#f0f0f0]" />
        <div className="ml-[294px] w-12 bg-[#55504a]" />
        <div className="flex-1" />
        <time className="mr-[83px] pt-1 text-xs leading-[12px] text-white">16:09</time>
      </div>
      <GaugeDialog />
    </div>
  );
}
